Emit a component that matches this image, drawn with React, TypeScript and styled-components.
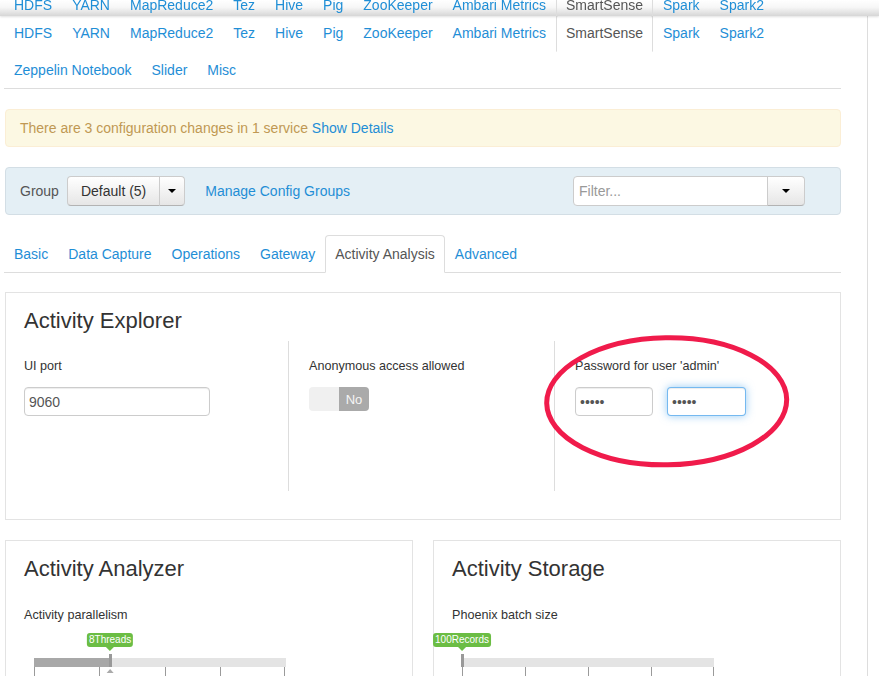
import React from "react";
import styled, { createGlobalStyle, css } from "styled-components";

const LINK = "#1f8ed6";

const GlobalStyle = createGlobalStyle`
  html, body { margin: 0; padding: 0; overflow: hidden; background: #fff; }
  body {
    font-family: "Liberation Sans", Arial, Helvetica, sans-serif;
    font-size: 14px;
    color: #333;
  }
  * { box-sizing: border-box; }
`;

const Page = styled.div`
  position: relative;
  width: 868px;
  height: 676px;
  overflow: hidden;
  border-right: 1px solid #ddd;
  padding: 14px 26px 0 5px;
`;

const FixedBar = styled.div`
  position: fixed;
  top: 0;
  left: 0;
  right: 0;
  height: 16px;
  overflow: hidden;
  z-index: 10;
  background: linear-gradient(to bottom, #ffffff 0%, #f7f7f7 45%, #d6d6d6 100%);
  box-shadow: 0 1px 2px rgba(0, 0, 0, 0.12);
`;

const FixedInner = styled.div`
  width: 841px;
  padding-left: 5px;
  margin-top: -14px;
`;

const TabList = styled.ul<{ $bare?: boolean }>`
  display: flex;
  flex-wrap: wrap;
  list-style: none;
  margin: 0 0 0 -1px;
  padding: 0;
  border-bottom: 1px solid ${(p) => (p.$bare ? "transparent" : "#ddd")};
`;

const TabItem = styled.li`
  margin-bottom: -1px;
`;

const TabLink = styled.a<{ $active?: boolean }>`
  display: block;
  padding: 8px 9px;
  line-height: 20px;
  font-size: 14px;
  border: 1px solid transparent;
  border-radius: 4px 4px 0 0;
  text-decoration: none;
  cursor: pointer;
  white-space: nowrap;
  color: ${LINK};
  ${(p) =>
    p.$active &&
    css`
      color: #555;
      border-color: #ddd #ddd #fff;
    `}
`;

const Alert = styled.div`
  margin-top: 20px;
  padding: 8px 14px;
  line-height: 20px;
  background: #fcf8e3;
  border: 1px solid #fbeed5;
  border-radius: 4px;
  color: #c09853;
`;

const Link = styled.a`
  color: ${LINK};
  text-decoration: none;
  cursor: pointer;
`;

const GroupBar = styled.div`
  margin-top: 20px;
  display: flex;
  align-items: center;
  padding: 8px 14px;
  background: #e4eff5;
  border: 1px solid #d3dee5;
  border-radius: 4px;
`;

const GroupLabel = styled.span`
  color: #555;
  margin-right: 8px;
  line-height: 20px;
`;

const BtnGroup = styled.div`
  display: flex;
`;

const Btn = styled.button<{ $caret?: boolean }>`
  height: 30px;
  padding: 0 13px;
  font-family: inherit;
  font-size: 14px;
  color: #333;
  background: linear-gradient(to bottom, #ffffff, #e6e6e6);
  border: 1px solid #ccc;
  border-bottom-color: #b3b3b3;
  border-radius: 4px 0 0 4px;
  display: flex;
  align-items: center;
  justify-content: center;
  ${(p) =>
    p.$caret &&
    css`
      width: 26px;
      padding: 0;
      margin-left: -1px;
      border-radius: 0 4px 4px 0;
    `}
`;

const FilterBtn = styled(Btn)`
  width: 38px;
  padding: 0;
  margin-left: -1px;
  border-radius: 0 4px 4px 0;
`;

const Caret = styled.span`
  width: 0;
  height: 0;
  border-top: 4px solid #000;
  border-left: 4px solid transparent;
  border-right: 4px solid transparent;
`;

const ManageLink = styled(Link)`
  margin-left: 20px;
`;

const FilterGroup = styled.div`
  display: flex;
  margin-left: auto;
  margin-right: 21px;
`;

const FilterInput = styled.input`
  width: 195px;
  height: 30px;
  padding: 0 5px;
  font-family: inherit;
  font-size: 14px;
  color: #555;
  border: 1px solid #ccc;
  border-radius: 4px 0 0 4px;
  background: #fff;
  outline: none;
  &::placeholder {
    color: #999;
  }
`;

const SubTabs = styled.div`
  margin-top: 20px;
`;

const Panel = styled.section`
  border: 1px solid #e3e3e3;
  padding: 15px 18px 28px;
  background: #fff;
`;

const PanelTitle = styled.h3`
  margin: 0;
  font-size: 22px;
  line-height: 26px;
  font-weight: normal;
  color: #333;
`;

const ExplorerPanel = styled(Panel)`
  margin-top: 19px;
`;

const Columns = styled.div`
  display: grid;
  grid-template-columns: 264px 266px 1fr;
  margin-top: 7px;
`;

const Column = styled.div<{ $divider?: boolean }>`
  min-height: 150px;
  padding-top: 16px;
  ${(p) =>
    p.$divider &&
    css`
      border-left: 1px solid #ddd;
      padding-left: 20px;
    `}
`;

const FieldLabel = styled.div`
  font-size: 12.6px;
  line-height: 18px;
  color: #333;
`;

const TextInput = styled.input<{ $width: number; $focus?: boolean }>`
  display: block;
  width: ${(p) => p.$width}px;
  height: 29px;
  margin-top: 12px;
  padding: 4px;
  font-family: "Liberation Sans", Arial, sans-serif;
  font-size: 14px;
  color: #555;
  background: #fff;
  border: 1px solid #ccc;
  border-radius: 4px;
  outline: none;
  box-shadow: inset 0 1px 1px rgba(0, 0, 0, 0.075);
  ${(p) =>
    p.$focus &&
    css`
      border-color: rgba(82, 168, 236, 0.8);
      box-shadow: inset 0 1px 1px rgba(0, 0, 0, 0.075), 0 0 8px rgba(82, 168, 236, 0.6);
    `}
`;

const PasswordRow = styled.div`
  display: flex;
  gap: 14px;
`;

const Toggle = styled.div`
  display: flex;
  width: 60px;
  height: 24px;
  margin-top: 12px;
  border-radius: 4px;
  overflow: hidden;
`;

const ToggleOff = styled.span`
  flex: 1;
  background: #f0f0f0;
`;

const ToggleLabel = styled.span`
  width: 30px;
  background: #aaa;
  color: #f5f5f5;
  font-size: 13px;
  display: flex;
  align-items: center;
  justify-content: center;
`;

const LowerRow = styled.div`
  display: grid;
  grid-template-columns: 1fr 1fr;
  gap: 20px;
  margin-top: 20px;
`;

const Field = styled.div`
  margin-top: 7px;
  padding-top: 17px;
`;

const SliderWrap = styled.div`
  position: relative;
  width: 252px;
  margin: 9px 0 0 10px;
  padding-top: 25px;
`;

const Badge = styled.span`
  position: absolute;
  top: 0;
  transform: translateX(-50%);
  height: 14px;
  padding: 0 2px;
  line-height: 14px;
  font-size: 10px;
  color: #fff;
  white-space: nowrap;
  background: #6bbd44;
  border-radius: 3px;
  &::after {
    content: "";
    position: absolute;
    left: 50%;
    bottom: -4px;
    margin-left: -4px;
    border-top: 4px solid #6bbd44;
    border-left: 4px solid transparent;
    border-right: 4px solid transparent;
  }
`;

const Track = styled.div`
  position: relative;
  height: 9px;
  background: #e4e4e4;
`;

const Fill = styled.div`
  height: 100%;
  background: #a8a8a8;
`;

const Handle = styled.span`
  position: absolute;
  top: -4px;
  width: 3px;
  height: 13px;
  margin-left: -1px;
  background: #999;
`;

const Ticks = styled.svg`
  display: block;
  overflow: visible;
`;

const Ellipse = styled.svg`
  position: absolute;
  left: 540px;
  top: 330px;
  pointer-events: none;
`;

const NAV = [
  "HDFS",
  "YARN",
  "MapReduce2",
  "Tez",
  "Hive",
  "Pig",
  "ZooKeeper",
  "Ambari Metrics",
  "SmartSense",
  "Spark",
  "Spark2",
  "Zeppelin Notebook",
  "Slider",
  "Misc",
];

const SUBTABS = ["Basic", "Data Capture", "Operations", "Gateway", "Activity Analysis", "Advanced"];

function Tabs({ items, active, bare }: { items: string[]; active: string; bare?: boolean }) {
  return (
    <TabList $bare={bare}>
      {items.map((t) => (
        <TabItem key={t}>
          <TabLink $active={t === active}>{t}</TabLink>
        </TabItem>
      ))}
    </TabList>
  );
}

function Slider({
  pct,
  label,
  ticks,
  marker,
}: {
  pct: number;
  label: string;
  ticks: number[];
  marker?: boolean;
}) {
  const x = (pct / 100) * 252;
  return (
    <SliderWrap>
      <Badge style={{ left: x }}>{label}</Badge>
      <Track>
        <Fill style={{ width: `${pct}%` }} />
        <Handle style={{ left: x }} />
      </Track>
      <Ticks width={252} height={20}>
        {ticks.map((t) => (
          <line key={t} x1={t + 0.5} x2={t + 0.5} y1={0} y2={20} stroke="#9a9a9a" strokeWidth={1} />
        ))}
        {marker && <polygon points={`${x - 3.5},6 ${x + 3.5},6 ${x},2`} fill="#aaa" />}
      </Ticks>
    </SliderWrap>
  );
}

export default function App() {
  return (
    <>
      <GlobalStyle />
      <Page>
        <Tabs items={NAV} active="SmartSense" />

        <Alert>
          There are 3 configuration changes in 1 service <Link>Show Details</Link>
        </Alert>

        <GroupBar>
          <GroupLabel>Group</GroupLabel>
          <BtnGroup>
            <Btn>Default (5)</Btn>
            <Btn $caret>
              <Caret />
            </Btn>
          </BtnGroup>
          <ManageLink>Manage Config Groups</ManageLink>
          <FilterGroup>
            <FilterInput placeholder="Filter..." readOnly />
            <FilterBtn>
              <Caret />
            </FilterBtn>
          </FilterGroup>
        </GroupBar>

        <SubTabs>
          <Tabs items={SUBTABS} active="Activity Analysis" />
        </SubTabs>

        <ExplorerPanel>
          <PanelTitle>Activity Explorer</PanelTitle>
          <Columns>
            <Column>
              <FieldLabel>UI port</FieldLabel>
              <TextInput $width={186} value="9060" readOnly />
            </Column>
            <Column $divider>
              <FieldLabel>Anonymous access allowed</FieldLabel>
              <Toggle>
                <ToggleOff />
                <ToggleLabel>No</ToggleLabel>
              </Toggle>
            </Column>
            <Column $divider>
              <FieldLabel>Password for user 'admin'</FieldLabel>
              <PasswordRow>
                <TextInput $width={78} type="password" value="admin" readOnly />
                <TextInput $width={79} $focus type="password" value="admin" readOnly />
              </PasswordRow>
            </Column>
          </Columns>
        </ExplorerPanel>

        <LowerRow>
          <Panel>
            <PanelTitle>Activity Analyzer</PanelTitle>
            <Field>
              <FieldLabel>Activity parallelism</FieldLabel>
              <Slider pct={30.2} label="8Threads" ticks={[0, 65, 131, 186, 250]} marker />
            </Field>
          </Panel>
          <Panel>
            <PanelTitle>Activity Storage</PanelTitle>
            <Field>
              <FieldLabel>Phoenix batch size</FieldLabel>
              <Slider pct={0} label="100Records" ticks={[0, 63, 126, 189, 251]} />
            </Field>
          </Panel>
        </LowerRow>

        <Ellipse width={260} height={145} viewBox="0 0 260 145">
          <ellipse
            cx={126.7}
            cy={71.3}
            rx={120}
            ry={63.5}
            fill="none"
            stroke="#f01b4b"
            strokeWidth={5}
            transform="rotate(-1 126.7 71.3)"
          />
        </Ellipse>
      </Page>

      <FixedBar>
        <FixedInner>
          <Tabs items={NAV} active="SmartSense" bare />
        </FixedInner>
      </FixedBar>
    </>
  );
}
